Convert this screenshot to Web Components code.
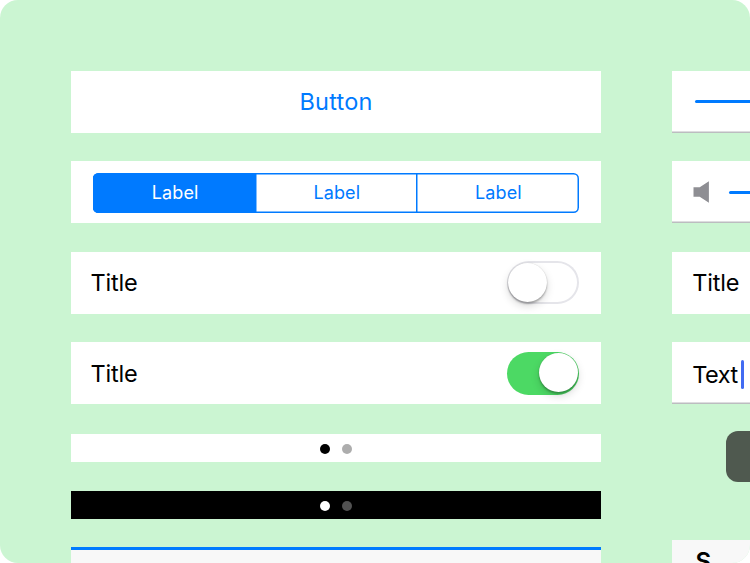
<!DOCTYPE html>
<html lang="en">
<head>
<meta charset="utf-8">
<title>iOS controls</title>
<style>
  html, body { margin: 0; height: 100%; overflow: hidden; background: #fff; }
  body { font-family: Inter, "Liberation Sans", sans-serif; font-weight: 370; color: #000; }
</style>
</head>
<body>
<ui-board>
  <ui-column>
    <ui-cell align="center"><ui-text tone="blue">Button</ui-text></ui-cell>
    <ui-cell>
      <ui-segmented>
        <ui-segment selected>Label</ui-segment>
        <ui-segment>Label</ui-segment>
        <ui-segment>Label</ui-segment>
      </ui-segmented>
    </ui-cell>
    <ui-cell><ui-text>Title</ui-text><ui-switch></ui-switch></ui-cell>
    <ui-cell><ui-text>Title</ui-text><ui-switch on></ui-switch></ui-cell>
    <ui-pages></ui-pages>
    <ui-pages dark></ui-pages>
    <ui-progress></ui-progress>
  </ui-column>
  <ui-column>
    <ui-cell line><ui-slider></ui-slider></ui-cell>
    <ui-cell line><ui-slider volume></ui-slider></ui-cell>
    <ui-cell><ui-text>Title</ui-text></ui-cell>
    <ui-cell line><ui-field>Text</ui-field></ui-cell>
    <ui-callout></ui-callout>
    <ui-header>S</ui-header>
  </ui-column>
</ui-board>

<script>
// Shared base: puts the markup of the class in an open shadow root
class UiElement extends HTMLElement {
  connectedCallback() {
    if (this.shadowRoot) return;
    this.attachShadow({ mode: 'open' }).innerHTML = this.constructor.markup;
  }
}

class UiBoard extends UiElement {
  static markup = `
    <style>
      :host {
        display: flex; gap: 71px; box-sizing: border-box;
        width: 750px; height: 563px; padding: 70.7px 0 0 70.8px;
        overflow: hidden; border-radius: 18px; background: #cbf5d2;
      }
    </style>
    <slot></slot>`;
}

class UiColumn extends UiElement {
  static markup = `
    <style>
      :host { display: flex; flex-direction: column; flex: none; width: 530.6px; }
    </style>
    <slot></slot>`;
}

class UiCell extends UiElement {
  static markup = `
    <style>
      :host {
        display: flex; flex: none; align-items: center; justify-content: space-between;
        box-sizing: border-box; height: 62.2px; margin-bottom: 28.35px;
        padding: 0 22.8px 0 20.5px; background: #fff;
      }
      :host([align="center"]) { justify-content: center; padding: 0; }
      :host([line]) { box-shadow: inset 0 -1.6px #bcbcc0; }
    </style>
    <slot></slot>`;
}

class UiText extends UiElement {
  static markup = `
    <style>
      :host { margin: .3px 0 0 -.7px; font-size: 23.5px; line-height: 30px; letter-spacing: -0.2px; white-space: nowrap; }
      :host([tone="blue"]) { margin: 0; color: #007aff; letter-spacing: .25px; }
    </style>
    <slot></slot>`;
}

class UiSegmented extends UiElement {
  static markup = `
    <style>
      :host {
        display: grid; grid-template-columns: 162.2px 161px 1fr; flex: 1;
        box-sizing: border-box; height: 40px; margin: .5px 0 0 1.8px; overflow: hidden;
        box-shadow: inset 0 0 0 1.5px #007aff; border-radius: 5.5px; color: #007aff;
      }
    </style>
    <slot></slot>`;
}

class UiSegment extends UiElement {
  static markup = `
    <style>
      :host {
        display: flex; align-items: center; justify-content: center;
        box-sizing: border-box; padding-left: 2px; box-shadow: inset 1.5px 0 #007aff;
        font-size: 18px; letter-spacing: .1px;
      }
      :host([selected]) { background: #007aff; color: #fff; }
    </style>
    <slot></slot>`;
}

class UiSwitch extends UiElement {
  static markup = `
    <style>
      :host {
        display: flex; align-items: center; box-sizing: border-box;
        width: 72px; height: 43px; padding: 1px; border-radius: 22px;
        box-shadow: inset 0 0 0 2px #e5e5ea;
      }
      :host([on]) { justify-content: flex-end; background: #4cd964; box-shadow: none; }
      i {
        width: 39px; height: 39px; margin-bottom: 1px; border-radius: 50%; background: #fff;
        box-shadow: 0 0 1px rgba(0,0,0,.2), 0 2px 2px rgba(0,0,0,.25), 0 4px 8px rgba(0,0,0,.15);
      }
    </style>
    <i></i>`;
}

class UiPages extends UiElement {
  static markup = `
    <style>
      :host {
        display: flex; flex: none; align-items: center; justify-content: center; gap: 12.6px;
        box-sizing: border-box; height: 28.3px; margin: 1.3px 0 28.3px; padding-top: 1.5px;
        background: #fff; --on: #000; --off: #adadad;
      }
      :host([dark]) { margin: 0 0 28.3px; background: #000; --on: #fff; --off: #525252; }
      i { width: 10px; height: 10px; border-radius: 50%; background: var(--on); }
      i + i { background: var(--off); }
    </style>
    <i></i><i></i>`;
}

class UiProgress extends UiElement {
  static markup = `
    <style>
      :host { display: block; flex: none; height: 60px; border-top: 3px solid #007aff; background: #f8f8f8; }
    </style>`;
}

class UiSlider extends UiElement {
  static markup = `
    <style>
      :host { display: flex; flex: 1; align-items: center; gap: 20px; padding-left: 2px; }
      :host(:not([volume])) { padding-bottom: .5px; }
      i { flex: 1; height: 3px; border-radius: 1.5px; background: #007aff; }
      svg { display: none; }
      :host([volume]) { padding-left: 0; }
      :host([volume]) svg { display: block; }
    </style>
    <svg width="16" height="22" viewBox="0 0 16 22" fill="#8e8e93"><path d="M.5 6.2H6.7L15.9.2V21.8L6.7 15.8H.5z"/></svg>
    <i></i>`;
}

class UiField extends UiElement {
  static markup = `
    <style>
      :host { display: flex; align-items: center; gap: 3px; margin-left: -.7px; padding-top: 3px; font-size: 23.5px; letter-spacing: -0.5px; }
      i { width: 3px; height: 29px; border-radius: 1.5px; background: #426bf2; }
    </style>
    <slot></slot><i></i>`;
}

class UiCallout extends UiElement {
  static markup = `
    <style>
      :host { display: block; flex: none; width: 300px; height: 51px; margin-left: 53.7px; margin-top: -1.5px; border-radius: 12px; background: #4f594f; }
    </style>`;
}

class UiHeader extends UiElement {
  static markup = `
    <style>
      :host {
        display: block; flex: none; box-sizing: border-box; height: 62px; margin-top: 58px; padding: 8px 0 0 23px;
        background: #f8f8f8; font-size: 24px; line-height: 28px; font-weight: 600;
      }
    </style>
    <slot></slot>`;
}

customElements.define('ui-board', UiBoard);
customElements.define('ui-column', UiColumn);
customElements.define('ui-cell', UiCell);
customElements.define('ui-text', UiText);
customElements.define('ui-segmented', UiSegmented);
customElements.define('ui-segment', UiSegment);
customElements.define('ui-switch', UiSwitch);
customElements.define('ui-pages', UiPages);
customElements.define('ui-progress', UiProgress);
customElements.define('ui-slider', UiSlider);
customElements.define('ui-field', UiField);
customElements.define('ui-callout', UiCallout);
customElements.define('ui-header', UiHeader);
</script>
</body>
</html>
